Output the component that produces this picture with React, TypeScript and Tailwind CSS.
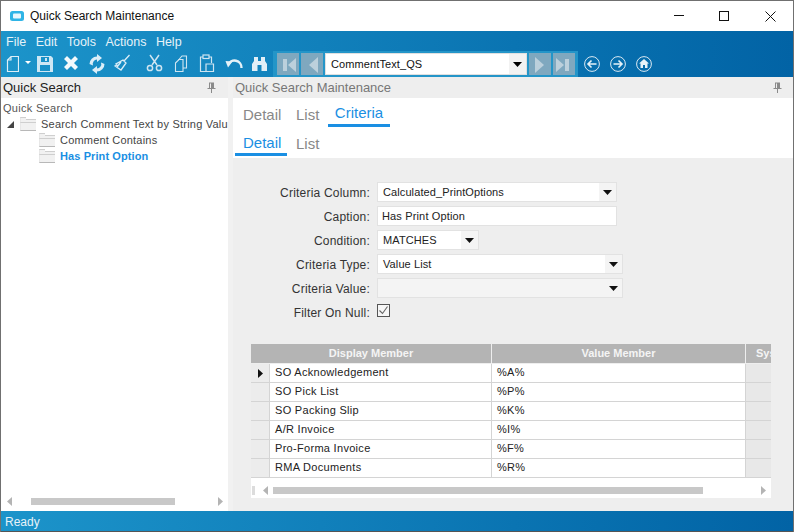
import React from "react";

const c = "#ffffff";
const I = ({ w = 22, children }: { w?: number; children: React.ReactNode }) => (
  <svg width={w} height="22" viewBox={`0 0 ${w} 22`} className="shrink-0 block">{children}</svg>
);

function Caret({ color = "#111" }: { color?: string }) {
  return <svg width="9" height="5" viewBox="0 0 9 5" className="block"><path d="M0 0H9L4.5 5Z" fill={color} /></svg>;
}

function Combo({ text, width, disabled }: { text: string; width: string; disabled?: boolean }) {
  return (
    <div className={`${width} h-5 border border-[#e2e2e2] flex items-center ${disabled ? "bg-[#f4f4f4]" : "bg-white"}`}>
      <span className="flex-1 pl-[5px] text-[11px] tracking-[0.1px] text-[#222] leading-none">{text}</span>
      <div className={`w-[17px] h-full flex items-center justify-center ${disabled ? "" : "bg-[#f4f4f4]"}`}><Caret /></div>
    </div>
  );
}

function Row({ label, children }: { label: string; children: React.ReactNode }) {
  return (
    <div className="flex items-center h-5 gap-[7px]">
      <div className="w-[129px] pt-[1px] text-right text-[12px] tracking-[0.2px] text-[#333] leading-none">{label}</div>
      {children}
    </div>
  );
}

function Leaf({ bold, label }: { bold?: boolean; label: string }) {
  return (
    <div className="flex items-center h-4 pl-[38px] gap-[5px]">
      <Folder />
      <span className={`text-[11px] leading-none ${bold ? "font-bold tracking-[0.1px] text-[#1a8fe3]" : "tracking-[0.2px] text-[#444]"}`}>{label}</span>
    </div>
  );
}

function Folder() {
  return (
    <svg width="16" height="16" viewBox="0 0 16 16" className="shrink-0 block">
      <path d="M0 1H6V3H16V15H0Z" fill="#f1f1f1" />
      <path d="M0 1.5H6M6 3.5H16M0 6.5H16" stroke="#cfcfcf" strokeWidth="1" fill="none" />
      <path d="M0 14.5H16" stroke="#b8b8b8" strokeWidth="1" fill="none" />
      <path d="M0 1V15" stroke="#dedede" strokeWidth="1" fill="none" />
    </svg>
  );
}

function Pin() {
  return (
    <svg width="9" height="11" viewBox="0 0 9 11" className="block">
      <path d="M2 .5H7V6H8.5V7H.5V6H2ZM3 1.5V6H4V1.5ZM4 7H5V11H4Z" fill="#8a8a8a" fillRule="evenodd" />
    </svg>
  );
}

function Nav({ dir, end }: { dir: "l" | "r"; end?: boolean }) {
  const d = dir === "l"
    ? (end ? "M6 6H10V18H6ZM19 5V19L11 12Z" : "M17 4V20L8 12Z")
    : (end ? "M16 6H12V18H16ZM3 5V19L11 12Z" : "M6 4V20L15 12Z");
  return (
    <div className="w-[22px] h-[22px] bg-[#7fa8bf] shrink-0">
      <svg width="22" height="22" viewBox="0 0 22 22" className="block"><path d={d} fill="#bcd0dc" /></svg>
    </div>
  );
}

function Circle({ children }: { children: React.ReactNode }) {
  return (
    <svg width="16" height="16" viewBox="0 0 16 16" className="block shrink-0">
      <circle cx="8" cy="8" r="7.4" fill="none" stroke="#dbe9f2" strokeWidth="1" />
      {children}
    </svg>
  );
}

const rows = [
  ["SO Acknowledgement", "%A%"],
  ["SO Pick List", "%P%"],
  ["SO Packing Slip", "%K%"],
  ["A/R Invoice", "%I%"],
  ["Pro-Forma Invoice", "%F%"],
  ["RMA Documents", "%R%"],
];

function HScrollArrow({ dir }: { dir: "l" | "r" }) {
  return (
    <svg width="5" height="9" viewBox="0 0 5 9" className="block shrink-0">
      <path d={dir === "l" ? "M5 0V9L0 4.5Z" : "M0 0V9L5 4.5Z"} fill="#b4b4b4" />
    </svg>
  );
}

export default function App() {
  return (
    <div className="w-[794px] h-[532px] overflow-hidden flex flex-col bg-white border-t border-l border-r border-[#707070] font-['Liberation_Sans',sans-serif]">
      {/* Title */}
      <div className="h-[30px] flex items-center bg-white shrink-0">
        <svg width="14" height="10" viewBox="0 0 14 10" className="ml-[9px] block"><rect width="14" height="10" rx="2.5" fill="#2fb4e6" /><rect x="3" y="2.5" width="8" height="5" rx="1" fill="#e8f7fd" /></svg>
        <span className="ml-[6px] text-[12px] text-[#111]">Quick Search Maintenance</span>
        <div className="ml-auto flex items-center">
          <svg width="10" height="2" viewBox="0 0 10 2" className="block mr-[35px]"><rect width="10" height="1" fill="#111" /></svg>
          <svg width="10" height="10" viewBox="0 0 10 10" className="block mr-[36px]"><rect x=".5" y=".5" width="9" height="9" fill="none" stroke="#111" /></svg>
          <svg width="11" height="11" viewBox="0 0 11 11" className="block mr-[17px]"><path d="M.5.5L10.5 10.5M10.5.5L.5 10.5" stroke="#111" /></svg>
        </div>
      </div>
      {/* Blue menu + toolbar */}
      <div className="h-[46px] shrink-0 bg-gradient-to-r from-[#1c94ca] to-[#0263a5] flex flex-col">
        <div className="h-[20px] flex items-center pl-[5px] gap-[9.5px] text-[12.5px] text-[#e6f2f8] pt-[2px]">
          <span>File</span><span>Edit</span><span>Tools</span><span>Actions</span><span>Help</span>
        </div>
        <div className="flex items-center h-[26px] pl-[5px]">
          <I w={13}><path d="M5 3.5H12.5V18.5H1.5V7Z M5 3.5V7H1.5" fill="none" stroke={c} strokeOpacity=".85" strokeWidth="1.2" /></I>
          <svg width="6" height="3" viewBox="0 0 6 3" className="block ml-[6px] mr-[5px] mb-1"><path d="M0 0H6L3 3Z" fill="#fff" /></svg>
          <I w={18}><path fillRule="evenodd" d="M1 3H15L17 5V19H1ZM5 4V9H13V4ZM9 5H11V8H9ZM4 12V18H14V12Z" fill="#cfe7f4" /></I>
          <div className="w-[9px]" />
          <I w={16}><path d="M1 6L4 3L8 7L12 3L15 6L11 10L15 14L12 17L8 13L4 17L1 14L5 10Z" fill="#fff" opacity=".95" /></I>
          <div className="w-[9px]" />
          <I w={18}><path d="M1.5 11A7.5 7.5 0 0 1 9 3.5L9 1L14 5L9 9V6.5A4.5 4.5 0 0 0 5 12.5Z M16.5 11A7.5 7.5 0 0 1 9 18.5L9 21L4 17L9 13V15.5A4.5 4.5 0 0 0 13 9.5Z" fill="#dceef8" /></I>
          <div className="w-[8px]" />
          <I w={17}><path d="M15.5 2L10 8M9 7L12 10L7 17L1 13L3 12L2 11Z M3 14L7 9" fill="none" stroke="#dceef8" strokeWidth="1.3" /></I>
          <div className="w-[15px]" />
          <I w={17}><g fill="none" stroke="#cfe5f1" strokeWidth="1.5"><path d="M4 2L11 12M13 2L6 12" /><circle cx="4" cy="15" r="2.6" /><circle cx="13" cy="15" r="2.6" /></g></I>
          <div className="w-[11px]" />
          <I w={14}><g fill="none" stroke="#cfe5f1" strokeWidth="1.1"><path d="M4.5 7L8 3H12.5V15H9" /><path d="M1.5 10L5 6.5H9V18.5H1.5Z" /></g></I>
          <div className="w-[11px]" />
          <I w={16}><g fill="none" stroke="#cfe5f1" strokeWidth="1.2"><path d="M4 4H1.5V18.5H7M10 4H12.5V10" /><rect x="4" y="2" width="6" height="3.5" /><path d="M7 11H14.5V18.5H7Z" /></g></I>
          <div className="w-[10px]" />
          <I w={18}><path d="M3 12A7 7 0 0 1 16.5 15" fill="none" stroke="#e6f2f8" strokeWidth="2.4" /><path d="M0.5 8L7.5 8.5L3 14.5Z" fill="#e6f2f8" /></I>
          <div className="w-[8px]" />
          <I w={17}><path fillRule="evenodd" d="M3 4H7V8H10V4H14V8L16 11V18H10.5V12H6.5V18H1V11L3 8Z" fill="#e1eff7" /></I>
          <div className="ml-[5px] flex items-center gap-[2px] h-[26px] bg-[#2495c8] pl-[4px] pr-[3px]">
            <Nav dir="l" end />
            <Nav dir="l" />
            <div className="w-[202px] h-[22px] bg-white border border-[#e0e0e0] flex items-center">
              <span className="flex-1 pl-[5px] text-[11px] tracking-[0.1px] text-[#111] leading-none">CommentText_QS</span>
              <div className="w-[17px] h-full bg-[#f2f2f2] flex items-center justify-center"><Caret color="#000" /></div>
            </div>
            <Nav dir="r" />
            <Nav dir="r" end />
          </div>
          <div className="flex items-center ml-[6px] gap-[10px]">
            <Circle><path d="M3.5 8H12.5M7.5 4.5L4 8L7.5 11.5" fill="none" stroke="#e6f2f8" strokeWidth="1.6" /></Circle>
            <Circle><path d="M3.5 8H12.5M8.5 4.5L12 8L8.5 11.5" fill="none" stroke="#e6f2f8" strokeWidth="1.6" /></Circle>
            <Circle><path d="M8 3L13 7.5H11.5V12H9V9H7V12H4.5V7.5H3Z" fill="#e6f2f8" /></Circle>
          </div>
        </div>
      </div>
      {/* Body */}
      <div className="flex-1 flex min-h-0">
        <div className="w-[227px] shrink-0 flex flex-col bg-white">
          <div className="h-[21px] bg-[#eeeeee] flex items-center pl-[2px] pr-[12px] pb-[1px] justify-between">
            <span className="text-[13px] text-[#222] leading-none">Quick Search</span>
            <Pin />
          </div>
          <div className="flex-1 pt-[3px] overflow-hidden">
            <div className="h-[15px] pl-[2px] flex items-center text-[11px] tracking-[0.3px] text-[#555] leading-none">Quick Search</div>
            <div className="flex items-center h-4 pl-[6px] whitespace-nowrap overflow-hidden">
              <svg width="7" height="7" viewBox="0 0 7 7" className="block shrink-0 mr-[6px]"><path d="M7 0V7H0Z" fill="#444" /></svg>
              <Folder />
              <span className="ml-[5px] text-[11px] tracking-[0.22px] text-[#444] leading-none">Search Comment Text by String Valu</span>
            </div>
            <Leaf label="Comment Contains" />
            <Leaf bold label="Has Print Option" />
          </div>
          <div className="h-[20px] flex items-center pl-[6px] pr-[5px] gap-[19px]">
            <HScrollArrow dir="l" />
            <div className="w-[144px] h-[7px] bg-[#c8c8c8]" />
            <div className="flex-1" />
            <HScrollArrow dir="r" />
          </div>
        </div>
        <div className="w-[5px] bg-[#f1f1f1] shrink-0" />
        <div className="flex-1 flex flex-col min-w-0">
          <div className="h-[21px] shrink-0 bg-[#eeeeee] flex items-center pl-[2px] pr-[11px] pb-[1px] justify-between">
            <span className="text-[13px] text-[#777] leading-none">Quick Search Maintenance</span>
            <Pin />
          </div>
          <div className="h-[30px] shrink-0 bg-white flex items-start text-[15px] text-[#888] leading-none">
            <div className="pl-[10px] w-[63px] pt-[9px]">Detail</div>
            <div className="w-[32px] pt-[9px]">List</div>
            <div className="w-[62px] h-[29px] pt-[7px] text-center text-[#1a8fe3] border-b-[3px] border-[#1a8fe3]">Criteria</div>
          </div>
          <div className="h-[30px] shrink-0 bg-white flex items-start text-[15px] text-[#888] leading-none">
            <div className="ml-[2px] w-[52px] h-[28px] pt-[7px] pl-[8px] text-[#1a8fe3] border-b-[3px] border-[#1a8fe3]">Detail</div>
            <div className="pl-[9px] pt-[8px]">List</div>
          </div>
          <div className="flex-1 bg-[#eeeeee] flex flex-col min-h-0">
            <div className="pt-[24px] pl-[8px] flex flex-col gap-1">
              <Row label="Criteria Column:"><Combo text="Calculated_PrintOptions" width="w-[240px]" /></Row>
              <Row label="Caption:">
                <div className="w-[240px] h-5 bg-white border border-[#e2e2e2] flex items-center pl-[4px] text-[11px] tracking-[0.15px] text-[#222] leading-none">Has Print Option</div>
              </Row>
              <Row label="Condition:"><Combo text="MATCHES" width="w-[102px]" /></Row>
              <Row label="Criteria Type:"><Combo text="Value List" width="w-[246px]" /></Row>
              <Row label="Criteria Value:"><Combo text="" width="w-[246px]" disabled /></Row>
              <Row label="Filter On Null:">
                <div className="w-[13px] h-[13px] mb-[3px] border border-[#555] bg-[#f6f6f6] flex items-center justify-center">
                  <svg width="11" height="11" viewBox="0 0 11 11" className="block"><path d="M1.5 5.5L4.5 8.5L9.5 1.5" fill="none" stroke="#666" strokeWidth="1.1" /></svg>
                </div>
              </Row>
            </div>
            <div className="mt-[22px] ml-[18px] w-[520px] flex flex-col text-[11px] leading-none overflow-hidden">
              <div className="flex h-[20px] bg-[#b4b4b4] border-b border-[#eeeeee] text-[#f4f4f4] font-bold">
                <div className="w-[241px] shrink-0 border-r border-[#eeeeee] flex items-center justify-center">Display Member</div>
                <div className="w-[254px] shrink-0 border-r border-[#eeeeee] flex items-center justify-center">Value Member</div>
                <div className="flex-1 min-w-0 pl-[10px] flex items-center overflow-hidden">Sys</div>
              </div>
              {rows.map(([a, b], i) => (
                <div key={a} className="flex h-[19px] border-b border-[#d4d4d4] text-[#222] tracking-[0.3px]">
                  <div className="w-[19px] shrink-0 bg-[#ececec] border-r border-[#d4d4d4] flex items-center justify-center">
                    {i === 0 && <svg width="5" height="9" viewBox="0 0 5 9" className="block"><path d="M0 0L5 4.5L0 9Z" fill="#111" /></svg>}
                  </div>
                  <div className="w-[222px] shrink-0 bg-white border-r border-[#d4d4d4] flex items-center pl-[5px] pb-[1px]">{a}</div>
                  <div className="w-[254px] shrink-0 bg-white border-r border-[#d4d4d4] flex items-center pl-[5px] pb-[1px]">{b}</div>
                  <div className="flex-1 bg-[#e8e8e8]" />
                </div>
              ))}
              <div className="h-[20px] pt-[4px] bg-white flex items-center pl-[1px] pr-[5px]">
                <div className="w-[3px] h-[9px] bg-[#dcdcdc] mr-[8px]" />
                <HScrollArrow dir="l" />
                <div className="ml-[5px] w-[430px] h-[7px] bg-[#c8c8c8]" />
                <div className="flex-1" />
                <HScrollArrow dir="r" />
              </div>
            </div>
          </div>
        </div>
      </div>
      {/* Status */}
      <div className="h-[21px] shrink-0 bg-gradient-to-r from-[#1c94ca] to-[#0263a5] border-b border-[#555] flex items-center pl-[4px] pt-[1px] text-[12px] text-[#e6f2f8] leading-none">Ready</div>
    </div>
  );
}
